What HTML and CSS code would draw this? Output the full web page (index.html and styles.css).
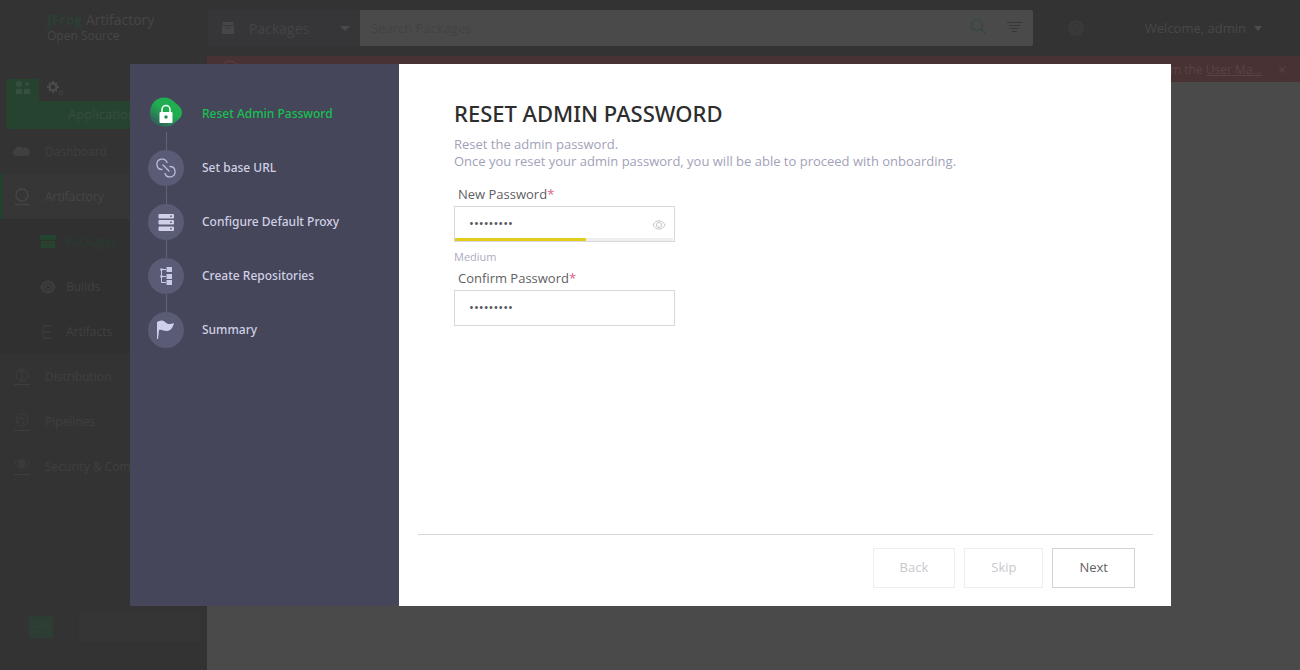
FILE: index.html
```
<!DOCTYPE html>
<html lang="en">
<head>
    <meta charset="UTF-8">
    <meta name="viewport" content="width=device-width, initial-scale=1.0">
    <title>Artifactory - Reset Admin Password</title>
    <link rel="stylesheet" href="styles.css">
</head>
<body>
    <!-- Top Bar -->
    <header class="topbar">
        <div class="brand">
            <div class="brand-name"><span class="brand-mark">JFrog</span> Artifactory</div>
            <div class="brand-edition">Open Source</div>
        </div>
        <div class="search">
            <button class="search-type" type="button">
                <svg width="14" height="14" viewBox="0 0 14 14"><path d="M2 1h10l1 3H1zM1 5h12v8H1z" fill="#474749"/><path d="M4 7h6" stroke="#38383a"/></svg>
                <span>Packages</span>
                <svg class="caret" width="10" height="5" viewBox="0 0 10 5"><path d="M0 0h10L5 5z" fill="#4a4a4c"/></svg>
            </button>
            <input class="search-input" type="text" placeholder="Search Packages" aria-label="Search Packages">
            <button class="search-btn" type="button" aria-label="Search">
                <svg width="17" height="17" viewBox="0 0 17 17" fill="none" stroke="#334a3c" stroke-width="1.2"><circle cx="7" cy="7" r="5.5"/><path d="M11 11l5 5"/></svg>
            </button>
            <button class="search-btn" type="button" aria-label="Filters">
                <svg width="15" height="12" viewBox="0 0 15 12" stroke="#383838"><path d="M0 1.5h15M2 4.5h11M3 7.5h9M5 10.5h5"/></svg>
            </button>
        </div>
        <svg class="help" width="18" height="18" viewBox="0 0 18 18"><circle cx="9" cy="9" r="8" fill="#393939"/><path d="M6 7a3 3 0 1 1 3 3v2" fill="none" stroke="#343434"/></svg>
        <button class="user-menu" type="button">
            Welcome, admin
            <svg width="8" height="5" viewBox="0 0 8 5"><path d="M0 0h8L4 5z" fill="#4c4c4c"/></svg>
        </button>
    </header>

    <div class="page">
        <!-- Sidebar -->
        <nav class="sidebar">
            <div class="module-tabs">
                <button class="module-tab active" type="button" aria-label="Application">
                    <svg width="18" height="14" viewBox="0 0 18 14" fill="#35503f"><circle cx="5" cy="3" r="3"/><circle cx="13" cy="3" r="2"/><rect x="2" y="8" width="6" height="5"/><rect x="10" y="8" width="6" height="5"/></svg>
                </button>
                <button class="module-tab" type="button" aria-label="Administration">
                    <svg width="19" height="15" viewBox="0 0 19 15" fill="none"><circle cx="7" cy="6" r="3.5" stroke="#4a4a4a" stroke-width="2.4"/><path d="M7 0v2M7 10v2M1 6h2M11 6h2M3 2l1 1M10 9l1 1M3 10l1-1M10 3l1-1" stroke="#4a4a4a" stroke-width="2"/><circle cx="15" cy="12" r="2" stroke="#414141"/></svg>
                </button>
            </div>
            <div class="module-name">Application</div>
            <a class="nav-item" href="#">
                <svg width="18" height="18" viewBox="0 0 18 18"><path d="M2 13a4 4 0 0 1 0-7 5 5 0 0 1 8-1 5 5 0 0 1 7 5l-2 3z" fill="#404040"/></svg>
                Dashboard
            </a>
            <a class="nav-item selected" href="#">
                <svg width="18" height="18" viewBox="0 0 18 18" fill="none" stroke="#464646" stroke-width="1.4"><circle cx="9" cy="7" r="6"/><path d="M2 16.5h14"/></svg>
                Artifactory
            </a>
            <div class="subnav">
                <a class="nav-item sub current" href="#">
                    <svg width="16" height="16" viewBox="0 0 16 16"><path d="M0 1h16v5H0zM1 7h14v7H1z" fill="#254430"/><path d="M4 9.5h8" stroke="#2f3330"/></svg>
                    Packages
                </a>
                <a class="nav-item sub" href="#">
                    <svg width="16" height="16" viewBox="0 0 16 16"><path d="M8 1l5 2 3 5-3 5-5 2-5-2-3-5 3-5z" fill="#3c3c3c"/><circle cx="8" cy="8" r="4" fill="none" stroke="#333"/><path d="M7 6l3 2-3 2z" fill="#303030"/></svg>
                    Builds
                </a>
                <a class="nav-item sub" href="#">
                    <svg width="16" height="16" viewBox="0 0 16 16" fill="none" stroke="#3b3b3b" stroke-width="1.3"><path d="M3 2v12M3 2h9M3 8h8M3 14h9"/></svg>
                    Artifacts
                </a>
            </div>
            <a class="nav-item" href="#">
                <svg width="18" height="18" viewBox="0 0 18 18" fill="none" stroke="#3e3e3e"><circle cx="9" cy="7" r="6"/><path d="M9 2v11M6 5l3-3 3 3M1 16.5h16"/></svg>
                Distribution
            </a>
            <a class="nav-item" href="#">
                <svg width="18" height="18" viewBox="0 0 18 18" fill="none" stroke="#3e3e3e"><circle cx="9" cy="7" r="6"/><path d="M6 10a3 3 0 1 1 5-3M9 9l4 3M1 17.5h16"/></svg>
                Pipelines
            </a>
            <a class="nav-item" href="#">
                <svg width="18" height="18" viewBox="0 0 18 18" fill="none" stroke="#3e3e3e"><path d="M1 4c5-3 11-3 16 0M2 5c2 7 12 7 14 0M1 16.5h16"/><circle cx="9" cy="6" r="3" fill="#3a3a3a"/></svg>
                Security &amp; Compliance
            </a>
            <div class="sidebar-footer">
                <svg width="28" height="28" viewBox="0 0 28 28"><path d="M2 3h24v22H2z" fill="#2e3d34"/><path d="M4 8l10 3 10-3M4 13h20M4 17l8 2" fill="none" stroke="#2b4434"/></svg>
                <div class="version"></div>
            </div>
        </nav>

        <main class="content">
            <div class="alert">
                <svg width="20" height="20" viewBox="0 0 20 20" fill="none" stroke="#5a3a3d" stroke-width="1.5"><circle cx="10" cy="10" r="8"/><path d="M10 5v6M10 13v2"/></svg>
                <p class="alert-text">from the <a href="#">User Ma...</a></p>
                <button class="alert-close" type="button" aria-label="Close">×</button>
            </div>
        </main>
    </div>

    <!-- Onboarding Wizard -->
    <div class="overlay">
        <div class="modal" role="dialog" aria-labelledby="wizard-title">
            <ol class="steps">
                <li class="step active">
                    <svg class="step-icon" width="36" height="36" viewBox="0 0 36 36">
                        <defs>
                            <linearGradient id="blob" x1="0.8" y1="0.1" x2="0.2" y2="1">
                                <stop offset="0.4" stop-color="#1fad50"/>
                                <stop offset="1" stop-color="#34575a"/>
                            </linearGradient>
                        </defs>
                        <path d="M16 1.5c5 0 8 2 11 5 4 3 7 6 7 10s-3 7-7 10c-3 3-7 5-12 4C7 30 2 25 2 17 2 8 8 1.5 16 1.5z" fill="url(#blob)"/>
                        <path d="M14 17v-3.5a4 4 0 0 1 8 0V17" fill="none" stroke="#fff" stroke-width="1.5"/>
                        <rect x="11.5" y="16" width="13" height="11" rx="1" fill="#fff"/>
                        <circle cx="18" cy="21" r="1.7" fill="#258a4d"/>
                    </svg>
                    Reset Admin Password
                </li>
                <li class="step">
                    <svg class="step-icon" width="36" height="36" viewBox="0 0 36 36">
                        <circle cx="18" cy="18" r="18" fill="#5a5c75"/>
                        <g fill="none" stroke="#bbbcd6" stroke-width="1.3" stroke-linecap="round">
                            <path d="M14 19.5a5.2 5.2 0 1 1 5-7"/>
                            <path d="M22 16.5a5.2 5.2 0 1 1-5 7"/>
                            <path d="M15 15l6 6"/>
                        </g>
                    </svg>
                    Set base URL
                </li>
                <li class="step">
                    <svg class="step-icon" width="36" height="36" viewBox="0 0 36 36">
                        <circle cx="18" cy="18" r="18" fill="#5a5c75"/>
                        <g fill="#d0d0e8"><rect x="10.5" y="10" width="15.5" height="4.5" rx="1"/><rect x="10.5" y="16" width="15.5" height="4.5" rx="1"/><rect x="10.5" y="22.5" width="15.5" height="4.5" rx="1"/></g>
                        <g fill="#5a5c75"><circle cx="23" cy="12.2" r="0.9"/><circle cx="23" cy="18.2" r="0.9"/><circle cx="23" cy="24.7" r="0.9"/></g>
                    </svg>
                    Configure Default Proxy
                </li>
                <li class="step">
                    <svg class="step-icon" width="36" height="36" viewBox="0 0 36 36">
                        <circle cx="18" cy="18" r="18" fill="#5a5c75"/>
                        <g fill="#c8cbe6"><rect x="18.5" y="9" width="5.5" height="5"/><rect x="18.5" y="16" width="5.5" height="5"/><rect x="18.5" y="22" width="5.5" height="5"/><circle cx="13.5" cy="11.5" r="1.3"/><circle cx="13.5" cy="18.5" r="1.3"/></g>
                        <path d="M13.5 11v13.5H18M13 11.5h5M13 18.5h5" fill="none" stroke="#c8cbe6"/>
                    </svg>
                    Create Repositories
                </li>
                <li class="step">
                    <svg class="step-icon" width="36" height="36" viewBox="0 0 36 36">
                        <circle cx="18" cy="18" r="18" fill="#5a5c75"/>
                        <path d="M9 10c3-2 6-2 8 0s5 3 9 1c-1 4-3 8-7 8s-5-2-8-1l-1 9H9z" fill="#cfd0ea"/>
                    </svg>
                    Summary
                </li>
            </ol>

            <form class="wizard" onsubmit="event.preventDefault()">
                <div class="wizard-body">
                    <h1 id="wizard-title">RESET ADMIN PASSWORD</h1>
                    <p class="intro">Reset the admin password.<br>Once you reset your admin password, you will be able to proceed with onboarding.</p>

                    <div class="field">
                        <label for="new-password">New Password<span class="required">*</span></label>
                        <div class="input-box">
                            <input type="password" id="new-password" value="Password1" required>
                            <button class="reveal" type="button" aria-label="Show password">
                                <svg width="14" height="10" viewBox="0 0 14 10" fill="none" stroke="#c4c4c8"><path d="M1 5c3-5.5 9-5.5 12 0-3 5.5-9 5.5-12 0z"/><circle cx="7" cy="5" r="2.5"/></svg>
                            </button>
                            <div class="strength"><div class="strength-bar"></div></div>
                        </div>
                        <div class="strength-label">Medium</div>
                    </div>

                    <div class="field">
                        <label for="confirm-password">Confirm Password<span class="required">*</span></label>
                        <div class="input-box">
                            <input type="password" id="confirm-password" value="Password1" required>
                        </div>
                    </div>
                </div>

                <div class="wizard-footer">
                    <button class="btn" type="button" disabled>Back</button>
                    <button class="btn" type="button" disabled>Skip</button>
                    <button class="btn" type="submit">Next</button>
                </div>
            </form>
        </div>
    </div>
</body>
</html>
```
FILE: styles.css
```
/* General Styles */
* {
    box-sizing: border-box;
}

body {
    font-family: 'Open Sans', sans-serif;
    font-size: 13px;
    margin: 0;
    min-height: 100vh;
    display: flex;
    flex-direction: column;
    background-color: #4a4a4a;
    color: #444;
}

button,
input {
    font-family: inherit;
    font-size: inherit;
}

button {
    background: none;
    border: none;
    padding: 0;
    color: inherit;
}

a {
    color: inherit;
    text-decoration: none;
}

/* Top Bar */
.topbar {
    display: flex;
    align-items: center;
    height: 56px;
    padding-right: 38px;
    background-color: #333;
}

.brand {
    width: 208px;
    padding-left: 47px;
    line-height: 16px;
    color: #464646;
}

.brand-name {
    font-size: 14px;
}

.brand-mark {
    color: #2b4033;
    font-weight: bold;
}

.brand-edition {
    font-size: 12px;
}

.search {
    flex: 1;
    display: flex;
    height: 36px;
    background-color: #4a4a4a;
    border-radius: 2px;
}

.search-type {
    display: flex;
    align-items: center;
    gap: 14px;
    width: 152px;
    padding: 0 10px 0 13px;
    background-color: #363638;
    color: #444446;
    font-size: 14px;
}

.caret {
    margin-left: auto;
}

.search-input {
    flex: 1;
    border: none;
    outline: none;
    background: none;
    padding: 0 11px;
    color: #424242;
}

.search-input::placeholder {
    color: #424242;
}

.search-btn {
    width: 36px;
}

.help {
    margin: 0 60px 0 34px;
}

.user-menu {
    display: flex;
    align-items: center;
    gap: 8px;
    color: #484848;
}

/* Page */
.page {
    flex: 1;
    display: flex;
}

/* Sidebar */
.sidebar {
    width: 207px;
    display: flex;
    flex-direction: column;
    padding-top: 23px;
    background-color: #333;
    color: #404040;
    font-size: 12px;
}

.module-tabs {
    display: flex;
    margin-left: 6px;
}

.module-tab {
    width: 33px;
    height: 22px;
}

.module-tab.active,
.module-name {
    background-color: #26432f;
}

.module-name {
    height: 28px;
    line-height: 26px;
    margin-left: 6px;
    padding-left: 62px;
    font-size: 13px;
    color: #34503d;
}

.nav-item {
    display: flex;
    align-items: center;
    gap: 14px;
    height: 45px;
    padding-left: 13px;
    white-space: nowrap;
}

.nav-item.selected {
    padding-left: 10px;
    border-left: 3px solid #24402e;
    background-color: #363636;
    color: #464646;
}

.subnav {
    background-color: #303030;
}

.nav-item.sub {
    gap: 10px;
    padding-left: 40px;
}

.nav-item.current {
    color: #293c30;
}

.sidebar-footer {
    display: flex;
    align-items: center;
    gap: 24px;
    margin-top: auto;
    padding: 0 7px 28px 27px;
}

.version {
    flex: 1;
    height: 30px;
    background-color: #353535;
}

/* Content */
.content {
    flex: 1;
}

.alert {
    display: flex;
    align-items: center;
    height: 26px;
    padding: 0 12px 0 13px;
    background-color: #493234;
    color: #5c4244;
    font-size: 12px;
}

.alert-text {
    margin: 0 14px 0 auto;
}

.alert-text a {
    text-decoration: underline;
}

.alert-close {
    width: 12px;
    font-size: 14px;
}

/* Onboarding Wizard */
.overlay {
    position: fixed;
    inset: 0;
    display: flex;
    padding: 64px 129px 64px 130px;
}

.modal {
    flex: 1;
    display: flex;
    background-color: #fff;
}

/* Steps */
.steps {
    width: 269px;
    margin: 0;
    padding: 32px 18px;
    list-style: none;
    background-color: #454659;
    color: #d0d0e6;
    font-family: 'Noto Sans', sans-serif;
    font-size: 12px;
    line-height: 16px;
    font-weight: 500;
}

.step {
    display: grid;
    grid-template-columns: 36px 1fr;
    column-gap: 18px;
    align-items: center;
}

.step-icon {
    display: block;
}

/* line between two step icons */
.step:not(:last-child)::after {
    content: '';
    width: 1px;
    height: 18px;
    margin-left: 18px;
    background-color: #626379;
}

.step.active {
    color: #17c052;
}

/* Wizard Form */
.wizard {
    flex: 1;
    display: flex;
    flex-direction: column;
    padding: 34px 18px 18px 19px;
}

.wizard-body {
    flex: 1;
    padding: 0 36px;
}

.wizard h1 {
    margin: 0;
    font-family: 'Noto Sans', sans-serif;
    font-size: 22px;
    line-height: 30px;
    font-weight: 500;
    color: #2d2d2d;
}

.intro {
    margin: 8px 0 15px;
    line-height: 17px;
    color: #a2a2b8;
}

.field {
    width: 221px;
}

.field label {
    display: block;
    padding-left: 4px;
    line-height: 18px;
    margin-bottom: 3px;
    color: #5f5f63;
}

.required {
    color: #e0607e;
}

.input-box {
    display: flex;
    flex-wrap: wrap;
    height: 36px;
    border: 1px solid #d8d8dc;
}

.input-box input {
    flex: 1;
    min-width: 0;
    height: 34px;
    padding: 0 14px 2px;
    border: none;
    outline: none;
    background: none;
    color: #55555a;
}

.reveal {
    width: 30px;
    height: 34px;
    padding-top: 2px;
}

.strength {
    width: 100%;
    height: 3px;
    margin: -3px 1px 0 0;
    background-color: #eee;
}

.strength-bar {
    width: 60%;
    height: 3px;
    background-color: #e3cd1d;
}

.strength-label {
    padding: 7px 0 4px;
    font-size: 11px;
    line-height: 16px;
    color: #acacbd;
}

/* Wizard Buttons */
.wizard-footer {
    display: flex;
    justify-content: flex-end;
    gap: 9px;
    padding: 13px 18px 0 0;
    border-top: 1px solid #d8d8dc;
}

.btn {
    height: 40px;
    padding: 0 26px 2px;
    border: 1px solid #d3d3d7;
    color: #5f5f63;
}

.btn:disabled {
    border-color: #eee;
    color: #c8c8ce;
}
```
